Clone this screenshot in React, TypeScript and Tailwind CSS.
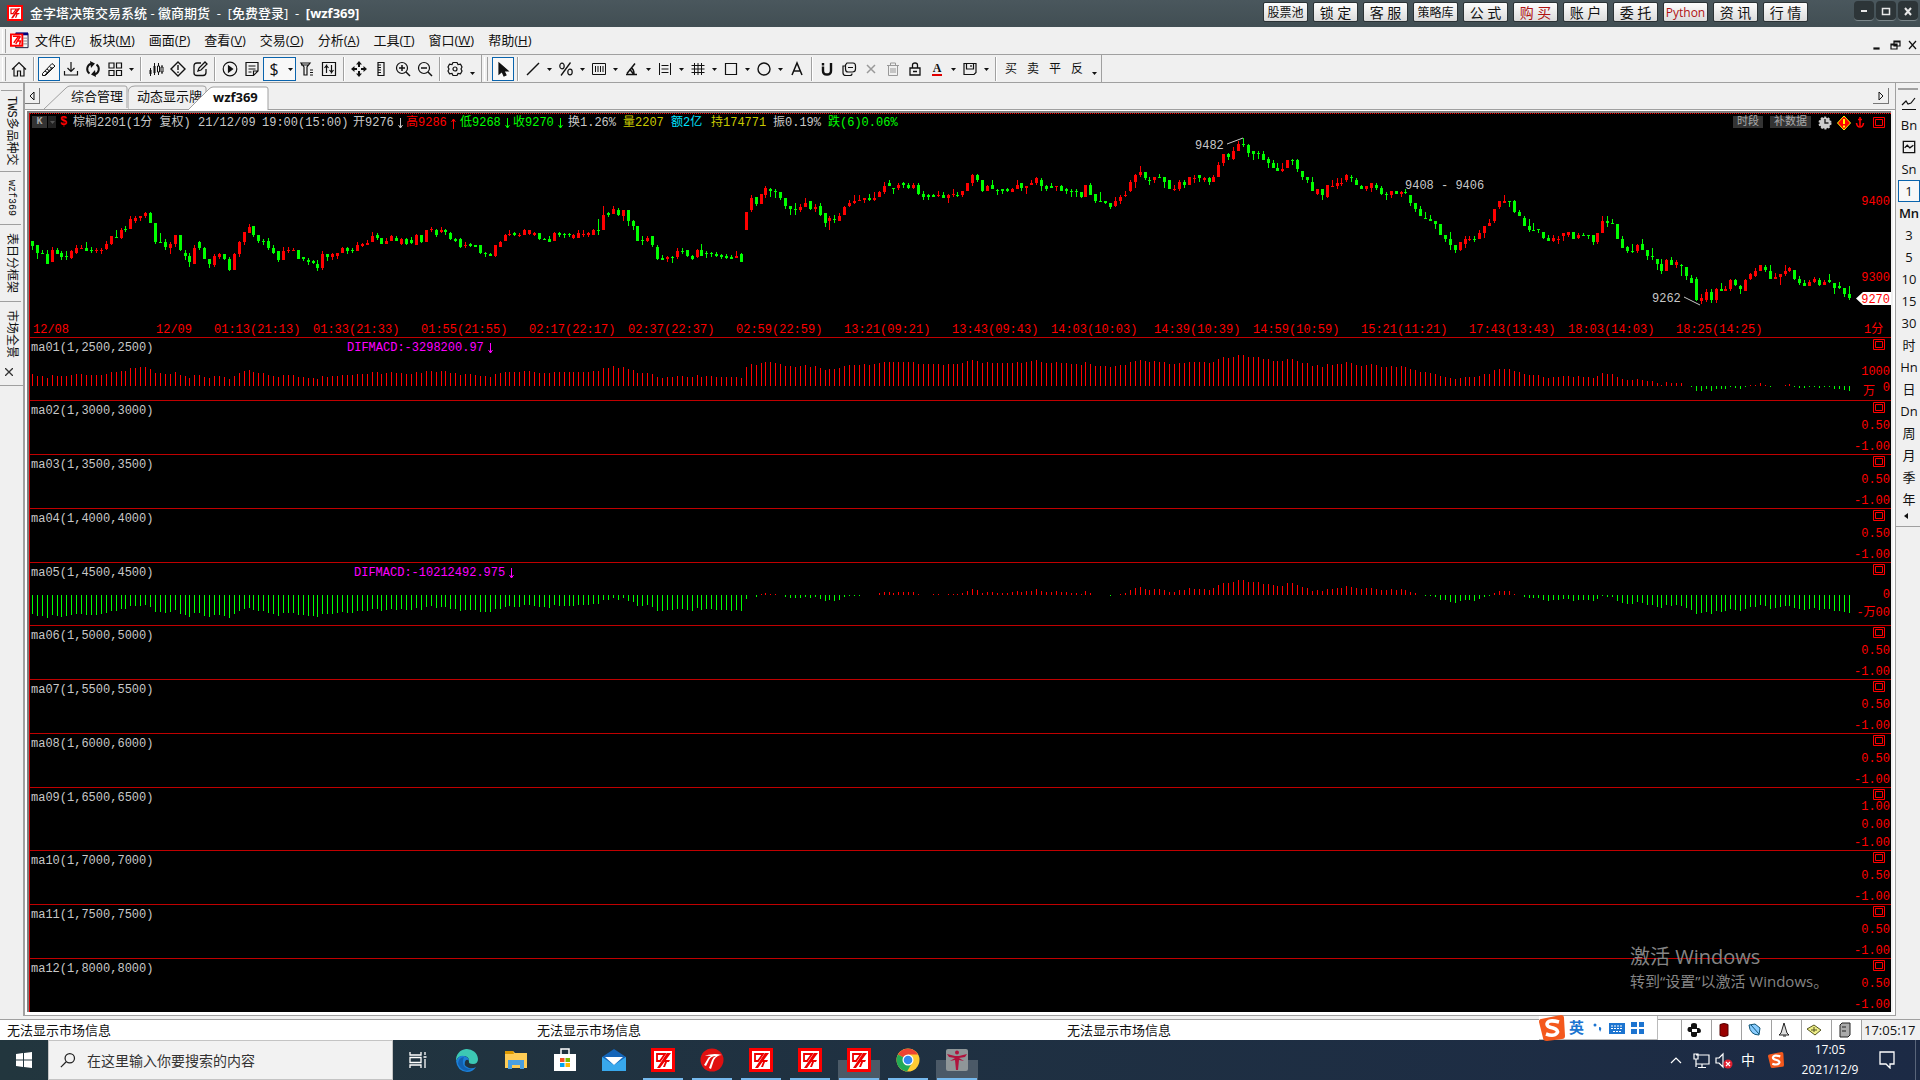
import React, { useState } from 'react';
import clsx from 'clsx';

// ---------- Price data ----------

// One candle per entry: colour (r/g), then high, body top, body bottom, low
const nightSession = `
g61,61,66,70 g65,65,73,79 g70,73,74,74 g70,74,84,84 r67,70,82,82 g68,70,74,74 g71,73,77,80 g71,76,77,80 r70,71,78,79 r65,68,73,74
r65,68,69,69 g62,68,71,71 g67,70,71,73 r68,70,71,73 r68,70,71,74 r61,64,69,70 r56,56,64,65 g50,57,58,58 r48,50,58,59 g46,49,50,52
r36,39,49,49 r36,38,41,43 r36,36,38,41 r32,33,36,38 g32,33,43,43 g43,43,62,64 g53,62,63,63 g59,62,67,70 r62,64,68,74 r55,55,64,67
g55,55,70,71 g70,73,76,80 g73,76,82,87 r65,68,84,84 g61,62,68,70 g67,68,79,79 g79,79,84,88 r74,76,85,87 r73,74,77,79 g74,74,79,80
g77,79,90,91 r73,74,90,90 r61,62,74,77 r52,52,62,65 r44,47,53,53 g46,46,55,57 g55,55,61,63 g59,61,62,65 g58,61,68,70 g65,68,73,74
g71,71,80,82 r67,71,80,80 r67,70,71,73 r68,70,71,71 g70,70,79,79 g77,77,79,81 g78,80,82,85 g80,81,83,84 g80,84,88,91 r71,74,88,90
g74,74,77,81 r73,74,77,80 r73,73,76,79 r67,68,73,73 g67,68,71,74 g68,70,71,73 r62,65,71,71 r63,64,66,67 r60,63,65,65 r52,56,62,62
g53,55,58,60 g58,58,64,64 r58,61,64,64 r55,56,61,61 g56,58,61,61 r58,59,64,65 g58,59,64,65 g57,60,63,64 r54,55,65,65 g55,55,62,63
r50,50,62,62 r47,49,50,52 g49,50,55,57 r47,50,52,53 g49,50,52,55 g52,53,59,60 g58,59,61,62 g58,59,67,68 r62,65,66,68 g63,64,66,67
g65,65,67,67 g65,65,73,74 g72,73,74,77 g73,74,76,76 r65,65,76,77 r61,62,67,67 r54,55,61,61 r50,54,55,56 g52,53,55,56 r53,55,56,57
r49,50,55,55 r50,50,54,55 r52,53,55,56 g53,53,59,60 g58,59,60,60 g56,59,62,62 r52,53,61,61 g52,53,55,57 g53,54,55,58 g53,54,55,57
r54,55,58,59 r50,53,58,58 r50,54,55,57 r52,53,55,57 r49,50,55,55 g39,50,51,55 r26,35,50,50 g32,33,35,37 r26,29,34,34 g28,30,35,36
r30,30,36,41 g30,30,41,46 g40,41,46,50 g46,46,61,61 g56,60,61,65 r56,58,61,62 g56,56,65,67 g65,67,79,80 g75,78,80,80 r76,77,79,82
g76,77,78,83 r68,71,77,79 g68,71,72,74 g70,70,76,77 g75,76,79,80 r69,70,77,78 g64,70,76,76 g71,73,74,78 g72,73,74,77 g72,74,76,77
g74,75,77,79 g74,76,78,79 g75,77,79,79 r71,76,78,78 g73,74,82,82`;

const daySession = `
r82,82,100,100 r65,68,80,82 g67,67,74,76 r64,64,74,74 r56,58,65,68 g58,59,61,67 g59,61,62,68 g62,62,68,70 g68,68,76,79 g76,76,79,85
g73,79,80,85 r74,77,80,82 r68,73,77,77 g71,71,79,80 r74,77,79,82 g73,76,85,86 g83,83,93,97 r86,88,91,100 g85,89,90,93 r83,86,91,91
r76,77,85,85 r70,73,76,77 r65,71,73,74 r65,70,71,71 r68,68,70,73 g64,68,70,71 r62,68,70,71 r61,62,67,67 r52,56,62,64 g50,53,56,56
g58,58,59,64 r53,55,58,60 g52,53,55,58 g53,55,58,59 r53,55,58,59 g53,55,64,65 g61,64,67,70 g64,65,67,70 g64,65,67,67 r61,65,66,67
g62,65,68,68 r64,65,68,73 r59,64,65,67 g62,65,66,67 r61,61,65,67 r53,53,61,61 r44,45,53,56 g44,45,50,52 g50,50,61,62 r55,56,61,61
g50,55,59,59 g59,60,61,65 g59,59,61,64 g58,59,61,62 r58,59,62,62 r50,55,59,59 g53,53,58,61 r56,56,58,64 r50,53,55,55 r47,48,53,55
g48,50,56,61 g55,56,59,61 g53,56,58,58 r56,56,57,61 g55,56,61,61 g58,59,61,64 g59,61,62,67 g59,61,62,67 g62,62,67,68 r55,55,67,67
g53,55,65,65 g64,64,71,73 g62,71,72,72 g71,71,73,74 g73,73,77,79 r67,71,76,77 r65,67,71,74 r61,65,66,67 r50,52,61,62 r44,45,52,58
r36,42,45,47 g42,42,48,50 g47,50,51,55 r47,47,50,53 g44,47,48,48 g47,47,52,58 g50,50,59,59 r55,59,60,61 r50,52,59,61 g50,52,55,58
r47,47,55,55 r45,48,49,53 g45,45,48,52 r47,48,50,52 g47,48,52,55 r45,47,52,52 r32,35,47,47 r24,24,33,36 g23,24,27,30 r17,21,29,30
r11,14,21,21 g8,14,15,17 g14,15,23,27 g21,21,24,30 g21,23,24,29 g21,24,30,30 g27,29,33,38 g30,33,38,38 g33,38,41,41 r33,39,41,42
r30,30,38,38 g29,30,31,35 g29,30,39,42 g41,41,47,50 g47,47,50,53 g47,52,61,61 r59,59,64,65 g59,59,65,70 r55,55,67,68 r50,56,57,57
r48,53,56,59 r48,53,54,56 r44,45,50,52 g45,47,48,52 g48,50,55,55 g55,56,59,59 r56,56,59,61 r53,53,58,62 g53,55,58,60 g56,58,64,65
g62,64,65,70 r61,61,65,68 g61,61,64,64 r61,62,64,67 g59,62,63,64 g65,65,73,76 g73,73,79,82 g76,79,86,86 g82,88,89,89 g85,89,91,91
g91,91,94,99 g94,94,105,105 g105,105,109,112 g102,109,115,120 g115,115,120,123 r112,112,120,121 r106,109,114,118 r106,109,110,111
g106,109,110,112 r100,103,109,109 r96,96,103,108 r89,93,96,96 r79,79,91,93 r71,71,77,79 r65,71,73,73 g71,71,72,77 g70,71,82,83
g80,82,86,86 g86,88,96,96 g89,96,100,102 g93,100,101,101 g99,99,100,103 g102,102,108,109 g105,108,111,111 r105,108,111,112
r106,109,110,114 r103,103,106,111 r102,102,105,107 g102,102,109,109 r103,105,108,109 g103,105,106,106 g105,105,106,109
g105,105,112,115 r103,103,112,114 r86,91,103,103 g86,91,93,97 g89,93,94,94 g94,94,109,109 g106,109,118,118 g116,117,121,123
g114,121,122,123 r114,115,121,123 g109,114,120,120 g120,120,126,130 g118,126,127,130 g129,129,134,140 g129,134,141,144
r129,130,141,141 g127,130,135,135 r130,132,135,138 g134,135,136,146 g137,137,146,150 g145,148,153,153 g147,149,170,171
r164,168,171,174 r159,162,170,172 g159,162,170,173 r158,159,170,173 g153,159,161,161 r156,159,161,161 r149,150,159,161
g149,150,155,156 g155,156,159,164 r149,150,161,161 r143,144,149,150 r138,141,146,147 r135,135,141,141 g135,137,140,142
g135,141,149,149 r143,147,149,149 r144,144,147,155 r135,141,144,146 r137,138,141,142 g140,140,149,150 g146,149,153,155
g150,153,156,156 r150,152,156,156 r147,149,152,153 g148,150,155,156 r150,152,155,155 g144,150,152,153 g153,153,158,164
g152,156,158,159 g158,158,164,167 g156,164,168,170`;

interface Candle {
  up: boolean;
  high: number;
  top: number;
  bottom: number;
  low: number;
}

const parseSession = (text: string, offset: number): Candle[] =>
  text.trim().split(/\s+/).map((item) => {
    const [high, top, bottom, low] = item.slice(1).split(',').map((n) => Number(n) + offset);
    return { up: item[0] === 'r', high, top, bottom, low };
  });

const candles = [...parseSession(nightSession, 67), ...parseSession(daySession, 17)];

const candleX = (i: number) => 3 + Math.floor((i * 64) / 13 + 0.4);

// Linear interpolation between the moving-average anchors
const interpolate = (points: number[][], x: number) => {
  const next = points.findIndex((p) => p[0] >= x);
  if (next <= 0) return points[0][1];
  const [x0, y0] = points[next - 1];
  const [x1, y1] = points[next];
  return y0 + ((y1 - y0) * (x - x0)) / (x1 - x0);
};

const buildBars = (anchors: number[][], slope: number) =>
  candles.map((c, i) => {
    const close = (c.up ? c.top : c.bottom) - 67;
    return Math.round(interpolate(anchors, i) - slope * close);
  });

const bars01 = buildBars([[0, 26.5], [149, 26], [214, 25], [245, 23], [290, 22], [369, 21]], 0.22);
const bars05 = buildBars(
  [[0, -2.5], [40, -1], [85, 1], [119, 4], [145, 4], [245, 6], [290, 9.5], [330, 9], [338, 11], [369, 11.5]],
  0.25
);

interface Panel {
  name: string;
  period: number;
  tall?: boolean;
  labels: [string, number][];
  value?: string;
  bars?: number[];
  base?: number;
}

const shortLabels: [string, number][] = [['0.50', 28], ['-1.00', 49]];

const panels: Panel[] = [
  { name: 'ma01', period: 2500, tall: true, labels: [['1000', 37], ['0', 53]], value: 'DIFMACD:-3298200.97', bars: bars01, base: 48 },
  { name: 'ma02', period: 3000, labels: shortLabels },
  { name: 'ma03', period: 3500, labels: shortLabels },
  { name: 'ma04', period: 4000, labels: shortLabels },
  { name: 'ma05', period: 4500, tall: true, labels: [['0', 35], ['-万00', 53]], value: 'DIFMACD:-10212492.975', bars: bars05, base: 32 },
  { name: 'ma06', period: 5000, labels: shortLabels },
  { name: 'ma07', period: 5500, labels: shortLabels },
  { name: 'ma08', period: 6000, labels: shortLabels },
  { name: 'ma09', period: 6500, tall: true, labels: [['1.00', 22], ['0.00', 40], ['-1.00', 58]] },
  { name: 'ma10', period: 7000, labels: shortLabels },
  { name: 'ma11', period: 7500, labels: shortLabels },
  { name: 'ma12', period: 8000, labels: shortLabels },
];

const timeLabels: [string, number][] = [
  ['12/08', 3], ['12/09', 126], ['01:13(21:13)', 184], ['01:33(21:33)', 283], ['01:55(21:55)', 391],
  ['02:17(22:17)', 499], ['02:37(22:37)', 598], ['02:59(22:59)', 706], ['13:21(09:21)', 814],
  ['13:43(09:43)', 922], ['14:03(10:03)', 1021], ['14:39(10:39)', 1124], ['14:59(10:59)', 1223],
  ['15:21(11:21)', 1331], ['17:43(13:43)', 1439], ['18:03(14:03)', 1538], ['18:25(14:25)', 1646],
];

// ---------- Toolbar icons ----------

const Svg = ({ children, size = 16 }: { children: React.ReactNode; size?: number }) => (
  <svg width={size} height={size} viewBox="0 0 16 16" fill="none" stroke="#111" strokeWidth="1.2" aria-hidden="true">
    {children}
  </svg>
);

const icons: Record<string, React.ReactNode> = {
  home: <path d="M1 8.500 8 1.500l7 7M3 7v8h3.500v-5h3v5H13V7" />,
  pen: <path strokeWidth="1" d="M1.500 12.500 11 2.500l3 2.500-9.500 9.500H1.500zM4 10l3 2M6 8l2.500 2M8.500 5.500l2.500 2M4 14l7.500-8" />,
  download: <path d="M8 1v9M4.500 7 8 10.500 11.500 7M1.500 10v4h13v-4" />,
  refresh: (
    <>
      <path strokeWidth="2" d="M4.500 12.500A5.500 5.500 0 0 1 6 2.800M11.500 3.500A5.500 5.500 0 0 1 10 13.200" />
      <path fill="#111" stroke="none" d="M5 0l5 2.500L6 7zM11 16l-5-2.500L10 9z" />
    </>
  ),
  grid: <path d="M2 2h5v5H2zM9.500 2h5v5h-5zM2 9.500h5v5H2zM9.500 9.500h5v5h-5z" />,
  candles: (
    <>
      <path d="M2.500 7v8M6.500 2v12M10.500 2v12M14 4v9" strokeWidth="1" />
      <path fill="#111" stroke="none" d="M1.500 9h2v4h-2zM5.500 5h2v7h-2z" />
      <path fill="#fff" strokeWidth="1" d="M9.500 5h2v6h-2zM13 6h2v5h-2z" />
    </>
  ),
  diamond: <path d="M8 1l7 7-7 7-7-7zM8 4v5M8 10.500v1.500" strokeWidth="1.400" />,
  edit: <path strokeWidth="1.300" d="M9 2H5Q2 2 2 5v7q0 2.500 3 2.500h6q3 0 3-3V8M6 10l1-3 6-6 2 2-6 6z" />,
  play: (
    <>
      <circle cx="8" cy="8" r="6.800" />
      <path fill="#111" d="M6.500 5l4 3-4 3z" />
    </>
  ),
  note: <path d="M2 1.500h12V10l-4.500 4.500H2zM4.500 5h7M4.500 8h7M4.500 11h3M14 10H9.500v4.500" />,
  filter: <path d="M2 2h9L8 6v8H5V6zM2 4h8M11 9h3M11 11.500h3M11 14h3" />,
  sort: <path d="M1.500 1.500h13v13h-13zM5.500 12V4.500L3.500 7M5.500 4.500l2 2.500M10.500 4v7.500l2-2.500M10.500 11.500l-2-2.500" />,
  move: (
    <>
      <path d="M8 2v4M8 10v4M2 8h4M10 8h4" strokeWidth="2" />
      <path fill="#111" d="M8 0l3 3.500H5zM8 16l3-3.500H5zM0 8l3.500-3v6zM16 8l-3.500-3v6z" stroke="none" />
    </>
  ),
  ruler: <path d="M5 1.500h6v13H5zM5 4h3M5 6.500h3M5 9h3M5 11.500h3" />,
  zoomIn: (
    <>
      <circle cx="7" cy="7" r="5.500" />
      <path d="M7 4v6M4 7h6M11 11l4 4" strokeWidth="1.500" />
    </>
  ),
  zoomOut: (
    <>
      <circle cx="7" cy="7" r="5.500" />
      <path d="M4 7h6M11 11l4 4" strokeWidth="1.500" />
    </>
  ),
  gear: (
    <>
      <path d="M6 1.500h4l1 2 2.500-.3L15 6l-1 2 1 2-1.500 2.800-2.500-.3-1 2H6l-1-2-2.500.3L1 10l1-2-1-2 1.500-2.800 2.500.3z" />
      <circle cx="8" cy="8" r="2" />
    </>
  ),
  cursor: <path fill="#111" d="M4 2v11l3-2.500 2 4.500 2-1-2-4h4z" />,
  line: <path d="M2 14 14 2" strokeWidth="1.500" />,
  percent: (
    <>
      <path d="M3 14.500 12.500 1.500" strokeWidth="1.300" />
      <ellipse cx="4" cy="5" rx="2.200" ry="2.800" />
      <ellipse cx="12" cy="11" rx="2.200" ry="2.800" />
    </>
  ),
  columns: <path d="M1.500 2.500h13v11h-13zM4.500 5v6M7 5v6M9.500 5v6M12 5v6" strokeWidth="1" />,
  angle: <path strokeWidth="1.500" d="M2 13.500h11M3 12.500l8-10M5.500 8l4.500 5.500M7 7q3 1 3 6" />,
  bounds: <path d="M2.500 2v12M13.500 2v12M4.500 4.500h7M4.500 8h7M4.500 11.500h7" strokeWidth="1" />,
  hash: <path d="M1.500 4.500h13M1.500 8h13M1.500 11.500h13M4.500 2v12M8 2v12M11.500 2v12" strokeWidth="1" />,
  square: <path d="M2.500 2.500h11v11h-11z" />,
  circle: <circle cx="8" cy="8" r="6" strokeWidth="1.400" />,
  text: <path d="M3 14 8 2l5 12M5 10h6" strokeWidth="1.500" />,
  magnet: <path d="M4 2v8q0 3.500 4 3.500T12 10V2" strokeWidth="2.400" strokeDasharray="2.500 1 40" />,
  copy: (
    <>
      <path d="M4 5H2v7q0 2.500 3 2.500h4q2 0 2-2" />
      <path d="M6 2h6q2.500 0 2.500 3v3q0 3-3 3H7Q4.500 11 4.500 8V4zM7 6.500h5" />
    </>
  ),
  close: <path d="M4 4l8 8M12 4l-8 8" stroke="#999" strokeWidth="1.500" />,
  trash: <path d="M2 4.500h12M5.500 4V2h5v2M3.500 5v9.500h9V5M6 7v5M8 7v5M10 7v5" stroke="#999" strokeWidth="1" />,
  lock: <path d="M3 7h10v7H3zM5.500 7V4q0-2 2.500-2t2.500 2v3M6 10.500h4" strokeWidth="1.300" />,
  save: <path d="M2 2.500h12v9l-2 2H2zM4.500 2.500V8h7V2.500M9 4v2" />,
};

const Caret = () => (
  <svg width="5" height="3" viewBox="0 0 5 3" aria-hidden="true">
    <path d="M0 0h5L2.500 3z" fill="#111" />
  </svg>
);

const Separator = () => (
  <span className="flex h-6 w-2 justify-center">
    <span className="w-0.5 border-l border-r border-l-[#a0a0a0] border-r-white" />
  </span>
);

const Grip = () => <span className="mx-0.5 h-6 w-1 border-l border-r border-l-white border-r-[#a0a0a0]" />;

interface ToolProps {
  icon?: string;
  text?: string;
  active?: boolean;
  menu?: boolean;
}

const Tool: React.FC<ToolProps> = ({ icon, text, active, menu }) => (
  <button
    type="button"
    aria-label={icon ?? text}
    className={clsx('flex h-6 items-center', active && 'border-y border-[#0a64ad] bg-[#f8f8f8] outline -outline-offset-1 outline-[#0a64ad]')}
  >
    <span className="flex w-[22px] justify-center text-base leading-none">{icon ? <Svg>{icons[icon]}</Svg> : text}</span>
    {menu && (
      <span className="flex w-[11px] justify-center">
        <Caret />
      </span>
    )}
  </button>
);

// ---------- Brand icons ----------

const KLogo = ({ size }: { size: number }) => (
  <svg width={size} height={size} viewBox="0 0 24 24" aria-hidden="true">
    <path fill="#f00" d="M0 0h24v24H0z" />
    <path fill="#fff" d="M3 3h18v18H3z" />
    <path fill="none" stroke="#e00" strokeWidth="1.800" d="M6 6h8l-5 7H6z" />
    <path fill="#e00" d="M16 5h4L9 20H6zM13 12h6l-1 2h-2l-2 5h-2l2-5h-3z" />
  </svg>
);

const SogouLogo = ({ size }: { size: number }) => (
  <svg width={size} height={size} viewBox="0 0 26 26" aria-hidden="true">
    <path fill="#f4581c" d="M2 4 22 0q3 0 3 3l1 18q0 3-3 3L8 26q-4 0-4-3L0 7q0-3 2-3z" />
    <path d="M20 7Q9 4 8 9q0 3 6 4 6 2 4 5-3 4-11 1" fill="none" stroke="#fff" strokeWidth="3.600" />
  </svg>
);

// ---------- Window header ----------

const quickLinks = ['股票池', '锁 定', '客 服', '策略库', '公 式', '购 买', '账 户', '委 托', 'Python', '资 讯', '行 情'];

const TitleBar = () => (
  <header className="flex h-[27px] shrink-0 items-start bg-linear-to-b from-[#4a575d] to-[#414e53] pr-0.5 text-white">
    <span className="mt-[5px] ml-[7px]">
      <KLogo size={16} />
    </span>
    <h1 className="ml-[7px] text-[13px] leading-[26px] font-medium whitespace-pre">
      金字塔决策交易系统 - 徽商期货  -  [免费登录]  -  <b className="font-bold">[wzf369]</b>
    </h1>
    <nav className="mt-0.5 ml-auto flex gap-[5px]">
      {quickLinks.map((label) => (
        <button
          type="button"
          key={label}
          className={clsx(
            'h-5 w-[45px] rounded-xs border border-[#2b3235] bg-linear-to-b from-[#fdfdfd] to-[#dcdcdc] leading-[17px] whitespace-nowrap',
            label.includes(' ') ? 'text-sm' : 'text-xs',
            label === '购 买' || label === 'Python' ? 'text-[#b01212]' : 'text-[#111]'
          )}
        >
          {label}
        </button>
      ))}
    </nav>
    <div className="mt-px ml-[46px] flex gap-0.5">
      {['M5 8h6', 'M4.500 5.500h7v6h-7z', 'M5 5l6 7M11 5l-6 7'].map((d, i) => (
        <button
          type="button"
          key={d}
          aria-label={['minimize', 'maximize', 'close'][i]}
          className="flex h-5 w-5 items-center justify-center rounded-sm border-b border-[#7b868a] bg-[#2d3538]"
        >
          <svg width="16" height="16" viewBox="0 0 16 16" fill="none" stroke="#e8e8e8" strokeWidth={i === 1 ? 1.5 : 2}>
            <path d={d} />
          </svg>
        </button>
      ))}
    </div>
  </header>
);

const menus = [['文件', 'F'], ['板块', 'M'], ['画面', 'P'], ['查看', 'V'], ['交易', 'O'], ['分析', 'A'], ['工具', 'T'], ['窗口', 'W'], ['帮助', 'H']];

const MenuBar = () => (
  <nav className="flex h-7 shrink-0 items-center border-b border-[#a0a0a0] pr-0.5">
    <Grip />
    <svg width="19" height="18" viewBox="0 0 20 18" className="mr-1.5 ml-0.5" aria-hidden="true">
      <path d="M6 1h13v15H6z" fill="#f4f4f4" stroke="#113" />
      <path d="M6 0h13v3H6z" fill="#00007c" />
      <path d="M14 6h4M14 9h4M14 12h4" stroke="#888" />
      <path d="M1 2h12v12H1z" fill="#fff" stroke="#f00" strokeWidth="2" />
      <path d="M3 4h6L4 11M11 4 6 12M8 9h3l-1 4" stroke="#f00" strokeWidth="1.600" fill="none" />
    </svg>
    {menus.map(([label, key]) => (
      <button type="button" key={key} className="mr-3.5 text-[13px]">
        {label}(<u>{key}</u>)
      </button>
    ))}
    <div className="mt-2 ml-auto flex gap-1.5">
      {['M1 9h5v1H1z', 'M4 2h6v5H4zM4 3h6M1 5h6v5H1zM1 6h6', 'M2 2l7 8M9 2l-7 8'].map((d, i) => (
        <button type="button" key={d} aria-label={['minimize chart', 'restore chart', 'close chart'][i]}>
          <svg width="11" height="12" viewBox="0 0 11 12" fill={i === 1 ? '#efefef' : 'none'} stroke="#111" strokeWidth="1.200">
            <path d={d} />
          </svg>
        </button>
      ))}
    </div>
  </nav>
);

const More = () => (
  <button type="button" aria-label="more" className="flex h-6 w-[13px] items-end justify-center pb-1.5">
    <Caret />
  </button>
);

const ToolBar = () => (
  <div className="flex h-7 shrink-0 items-center border-b border-[#a0a0a0] pt-px">
    <Grip />
    <Tool icon="home" />
    <Separator />
    <Tool icon="pen" active />
    <Tool icon="download" />
    <Tool icon="refresh" />
    <Tool icon="grid" menu />
    <Separator />
    <Tool icon="candles" />
    <Tool icon="diamond" />
    <Tool icon="edit" />
    <Separator />
    <Tool icon="play" />
    <Tool icon="note" />
    <Tool text="$" menu active />
    <Tool icon="filter" />
    <Tool icon="sort" />
    <Separator />
    <Tool icon="move" />
    <Tool icon="ruler" />
    <Tool icon="zoomIn" />
    <Tool icon="zoomOut" />
    <Separator />
    <Tool icon="gear" />
    <More />
    <span className="ml-0.5 h-7 border-l border-[#a0a0a0]" />
    <Grip />
    <span className="w-0.5" />
    <Tool icon="cursor" active />
    <Separator />
    <Tool icon="line" menu />
    <Tool icon="percent" menu />
    <Tool icon="columns" menu />
    <Tool icon="angle" menu />
    <Tool icon="bounds" menu />
    <Tool icon="hash" menu />
    <Tool icon="square" menu />
    <Tool icon="circle" menu />
    <Tool icon="text" />
    <Separator />
    <Tool icon="magnet" />
    <Tool icon="copy" />
    <Tool icon="close" />
    <Tool icon="trash" />
    <Tool icon="lock" />
    <button type="button" aria-label="text colour" className="flex h-6 items-center">
      <span className="mx-1.5 w-2.5 border-b-2 border-[#e00000] text-center text-xs leading-3 font-bold [font-family:'Liberation_Serif',serif]">
        A
      </span>
      <span className="flex w-[11px] justify-center">
        <Caret />
      </span>
    </button>
    <Tool icon="save" menu />
    <Separator />
    {['买', '卖', '平', '反'].map((label) => (
      <button type="button" key={label} className="w-[22px] text-xs">
        {label}
      </button>
    ))}
    <More />
    <span className="h-7 border-l border-[#a0a0a0]" />
  </div>
);

// ---------- Docks ----------

const LeftDock = () => (
  <aside className="w-[23px] shrink-0">
    <div className="h-[303px] border-b border-[#a0a0a0] pt-1">
      <div className="mx-px h-1 border-b border-[#a0a0a0]" />
      {[
        ['TWS多品种交', 'h-[81px]'],
        ['wzf369', 'h-[53px]'],
        ['表日分框架', 'h-[77px]'],
        ['市场全景', 'h-[64px]'],
      ].map(([label, height], i) => (
        <button
          type="button"
          key={label}
          className={clsx(
            'flex w-[21px] items-center justify-center leading-[14px] [font-family:"Liberation_Mono","Noto_Sans_CJK_SC",monospace]',
            height,
            i === 1 ? 'text-[10px]' : 'text-xs',
            i < 3 && 'border-b border-[#a0a0a0]'
          )}
        >
          <span className="whitespace-nowrap [text-orientation:sideways] [writing-mode:vertical-rl]">{label}</span>
        </button>
      ))}
      <button type="button" aria-label="close dock" className="flex h-3 w-[18px] items-center justify-center">
        <svg width="8" height="8" viewBox="0 0 8 8" stroke="#333" strokeWidth="1.300">
          <path d="M0 0l8 8M8 0 0 8" />
        </svg>
      </button>
    </div>
  </aside>
);

const periods = ['line', 'Bn', 'tick', 'Sn', '1', 'Mn', '3', '5', '10', '15', '30', '时', 'Hn', '日', 'Dn', '周', '月', '季', '年'];

const RightDock = () => {
  const [period, setPeriod] = useState('1');

  return (
    <aside className="w-[25px] shrink-0 border-l border-[#a0a0a0]">
      <div className="flex flex-col border-b border-[#a0a0a0] pt-[5px] pb-1">
        <div className="mx-0.5 h-1 border-t-2 border-[#a0a0a0]" />
        {periods.map((p) => (
          <button
            type="button"
            key={p}
            aria-label={p}
            onClick={() => setPeriod(p)}
            className={clsx(
              'ml-0.5 flex h-[22px] items-center justify-center text-[13px] leading-none',
              p === period && 'border border-[#0a64ad] bg-[#f8f8f8]',
              p === 'Mn' && 'font-semibold'
            )}
          >
            {p === 'line' && <Svg><path d="M1 10l4-4 2 3 3-1 4-5M1 14.500h14" /></Svg>}
            {p === 'tick' && <Svg size={14}><path d="M1.500 1.500h13v13h-13zM3 9l3-3 3 3 4-3" strokeWidth="1.500" /></Svg>}
            {p !== 'line' && p !== 'tick' && p}
          </button>
        ))}
        <span className="flex h-3 items-center pl-2">
          <svg width="4" height="6" viewBox="0 0 4 6" aria-hidden="true">
            <path d="M4 0v6L0 3z" fill="#111" />
          </svg>
        </span>
      </div>
    </aside>
  );
};

// ---------- Tabs ----------

const TabStrip = () => (
  <div className="flex h-[27px] shrink-0 items-end border-b border-[#a0a0a0] pr-1.5">
    <button
      type="button"
      aria-label="previous tab"
      className="mb-[5px] flex h-4 w-[15px] items-center justify-center border-r border-b border-[#777]"
    >
      <svg width="6" height="10" viewBox="0 0 6 10" fill="none" stroke="#111">
        <path d="M5 1v8L1 5z" />
      </svg>
    </button>
    {[
      ['综合管理', 'ml-1 w-[84px] pl-[27px]', 'M0 24 22 3q2-2 4-2h55q2 0 2 2v20'],
      ['动态显示牌', 'w-[79px] pl-[9px]', 'M0 24V8q0-7 7-7h68q3 0 3 2v20'],
      ['wzf369', 'z-10 -mb-px -ml-[19px] w-[81px] pl-[25px] font-bold', 'M0 24 21 3q2-2 4-2h53q2 0 2 2v21'],
    ].map(([label, layout, d], i) => (
      <button
        type="button"
        key={label}
        className={clsx('relative h-6 overflow-hidden text-left text-[13px] whitespace-nowrap', layout)}
      >
        <svg className="absolute inset-0 h-full w-full" fill={i === 2 ? '#fff' : '#f0f0f0'} stroke="#a0a0a0">
          <path d={d} />
        </svg>
        <span className="relative">{label}</span>
      </button>
    ))}
    <button
      type="button"
      aria-label="next tab"
      className="mb-[5px] ml-auto flex h-4 w-4 items-center justify-center border-r border-b border-[#777]"
    >
      <svg width="6" height="10" viewBox="0 0 6 10" fill="none" stroke="#111">
        <path d="M1 1v8l4-4z" />
      </svg>
    </button>
  </div>
);

// ---------- Chart ----------

const PanelButton = () => (
  <button type="button" aria-label="maximize panel" className="relative mt-px mr-1.5">
    <svg className="block" width="12" height="11" viewBox="0 0 12 11" fill="none" stroke="#f00">
      <path d="M.5.5h11v10H.5zM2.500 2.500h7v6h-7z" />
    </svg>
  </button>
);

const Arrow = ({ up = false }: { up?: boolean }) => (
  <svg className="ml-1 inline-block" width="5" height="11" viewBox="0 0 5 11" fill="none" stroke="currentColor" aria-hidden="true">
    <path d={up ? 'M2.500 11V1M.5 4l2-3 2 3' : 'M2.500 0v10M.5 7l2 3 2-3'} />
  </svg>
);

const quotes = [
  ['棕榈2201(1分 复权)', 'w-[125px] text-[#c8c8c8]', ''],
  ['21/12/09', 'w-16 text-[#c8c8c8]', ''],
  ['19:00(15:00)', 'w-[91px] text-[#c8c8c8]', ''],
  ['开9276', 'w-[53px] text-[#c8c8c8]', 'down'],
  ['高9286', 'w-[54px] text-[#f00]', 'up'],
  ['低9268', 'w-[53px] text-[#0f0]', 'down'],
  ['收9270', 'w-[55px] text-[#0f0]', 'down'],
  ['换1.26%', 'w-[55px] text-[#c8c8c8]', ''],
  ['量2207', 'w-12 text-[#c8c800]', ''],
  ['额2亿', 'w-10 text-[#00e4ff]', ''],
  ['持174771', 'w-[62px] text-[#c8c800]', ''],
  ['振0.19%', 'w-[55px] text-[#c8c8c8]', ''],
  ['跌(6)0.06%', 'w-20 text-[#0f0]', ''],
];

const PricePanel = () => (
  <section className="relative min-h-0 flex-1 border-t border-dotted border-[#f00]">
    <svg
      className="absolute inset-0 h-full w-full"
      viewBox="0 1 1861 223"
      preserveAspectRatio="xMinYMin meet"
      fontSize="12"
      role="img"
      aria-label="price"
    >
      <g shapeRendering="crispEdges">
        {candles.map((c, i) => (
          <g key={i} fill={c.up ? '#f00' : '#0f0'}>
            <rect x={candleX(i) - 1} y={c.high} width="1" height={Math.max(1, c.low - c.high)} />
            <rect x={candleX(i) - 2} y={c.top} width="3" height={Math.max(1, c.bottom - c.top)} />
          </g>
        ))}
      </g>
      <g fill="#c8c8c8" stroke="none">
        <text x="1165" y="36">9482</text>
        <text x="1375" y="76">9408 - 9406</text>
        <text x="1622" y="189">9262</text>
      </g>
      <path d="M1197 31l16-6M1654 184l16 8" stroke="#c8c8c8" />
      <path d="M1826 185.500l7-6.500h29v13h-29z" fill="#fff" />
      <g fill="#f00">
        <text x="1860" y="92" textAnchor="end">9400</text>
        <text x="1860" y="168" textAnchor="end">9300</text>
        <text x="1860" y="190" textAnchor="end">9270</text>
        {timeLabels.map(([label, x]) => (
          <text key={label} x={x} y="220">{label}</text>
        ))}
        <text x="1834" y="220">1分</text>
      </g>
    </svg>

    <div className="relative flex h-4 items-center text-xs leading-none">
      <button type="button" className="ml-0.5 h-3 w-[15px] bg-[#333] text-[10px] leading-none font-bold text-[#aaa]">K</button>
      <button type="button" aria-label="symbol list" className="ml-px flex h-3 w-2 items-center justify-center bg-[#222]">
        <svg width="5" height="3" viewBox="0 0 5 3"><path d="M0 0h5L2.500 3z" fill="#555" /></svg>
      </button>
      <b className="mr-0.5 w-[15px] text-center text-[#f00]">$</b>
      <div className="flex pt-0.5">
        {quotes.map(([label, style, arrow]) => (
          <span key={label} className={clsx('flex shrink-0 items-center whitespace-nowrap', style)}>
            {label}
            {arrow && <Arrow up={arrow === 'up'} />}
          </span>
        ))}
      </div>
      <button type="button" className="ml-auto h-3 w-[30px] bg-[#333] text-[11px] leading-none text-[#aaa]">时段</button>
      <button type="button" className="mr-1.5 ml-[7px] h-3 w-[41px] bg-[#333] text-[11px] leading-none text-[#aaa]">补数据</button>
      <svg width="56" height="15" viewBox="0 0 56 15" aria-hidden="true">
        <circle cx="8" cy="8" r="5.500" fill="#ccc" stroke="#ccc" strokeDasharray="2 1.500" strokeWidth="2" />
        <path d="M8 4v4h3.500" stroke="#222" fill="none" strokeWidth="1.400" />
        <path d="M27 1l6.500 7L27 15l-6.500-7z" fill="#f00" stroke="#ff0" />
        <path d="M27 4v5M27 10.500v2" stroke="#ff0" strokeWidth="2" />
        <path d="M43 2v9M41 4.500h4M39.500 8q.5 4 3.500 4t3.500-4" stroke="#f00" strokeWidth="1.600" fill="none" />
      </svg>
      <PanelButton />
    </div>
  </section>
);

const IndicatorPanel: React.FC<{ panel: Panel }> = ({ panel }) => {
  const { name, period, tall, labels, value, bars, base = 0 } = panel;

  return (
    <section className={clsx('relative flex shrink-0 items-start border-t border-[#c00000]', tall ? 'h-[63px]' : 'h-[54px]')}>
      <svg
        className="absolute inset-0 h-full w-full"
        viewBox={tall ? '0 0 1861 62' : '0 0 1861 53'}
        preserveAspectRatio="xMinYMin meet"
        fontSize="12"
        role="img"
        aria-label={name}
      >
        <g shapeRendering="crispEdges">
          {bars?.map((h, i) =>
            h === 0 ? null : (
              <rect
                key={i}
                x={candleX(i) - 1}
                y={h > 0 ? base - h : base}
                width="1"
                height={Math.abs(h)}
                fill={h > 0 ? '#f00' : '#0f0'}
              />
            )
          )}
        </g>
        <g fill="#f00" textAnchor="end">
          {labels.map(([label, y]) => (
            <text key={label} x="1860" y={y}>{label}</text>
          ))}
          {name === 'ma01' && <text x="1845" y="57">万</text>}
        </g>
      </svg>
      <span className={clsx('relative pl-px text-xs leading-5 text-[#c8c8c8]', name === 'ma05' ? 'w-[324px]' : 'w-[317px]')}>
        {name}(1,{period},{period})
      </span>
      {value && (
        <span className="relative flex items-center text-xs leading-5 text-[#f0f]">
          {value}
          <Arrow />
        </span>
      )}
      <span className="flex-1" />
      <PanelButton />
    </section>
  );
};

const Chart = () => (
  <div className="flex min-h-0 flex-1 flex-col border-t-2 border-l-2 border-[#808080]">
    <div className="relative flex min-h-0 flex-1 flex-col border-l border-[#d00000] bg-black [font-family:'Liberation_Mono','Noto_Sans_CJK_SC',monospace]">
      <PricePanel />
      {panels.map((panel) => (
        <IndicatorPanel key={panel.name} panel={panel} />
      ))}
      <div className="pointer-events-none absolute right-16 bottom-[21px] w-[197px] text-[#858585] [font-family:'Open_Sans','Noto_Sans_CJK_SC',sans-serif]">
        <p className="text-xl leading-7">激活 Windows</p>
        <p className="text-[15px] leading-5 whitespace-nowrap">转到“设置”以激活 Windows。</p>
      </div>
    </div>
  </div>
);

// ---------- Status bar ----------

const statusIcons: [string, React.ReactNode][] = [
  ['python', <path d="M5 3q0-2 3-2t3 2v4H6v3H3Q1 9 1.500 7T3 5h2zM11 13q0 2-3 2t-3-2v-3h6V6h2q2 1 2 3t-2 2h-2z" fill="#111" />],
  ['database', <path d="M4 2.500q4-2 8 0v11q-4 2-8 0z" fill="#900" stroke="#500" />],
  ['dish', <path d="M3 3q1 10 10 10L14 6 9 2zM5 3l8 9" fill="#8cf" stroke="#157" />],
  ['alarm', <path d="M8 1 5 11l-2 2h10l-2-2zM7 14h3" fill="#ddd" stroke="#222" />],
  ['message', <path d="M1 7l7-4 7 5-6 5zM5 8h6M8 5v5" fill="#ee8" stroke="#552" />],
  ['server', <path d="M4 3l2-2h8v12l-2 2H4zM6 5h4M6 9h4" fill="#aaa" stroke="#222" />],
];

const StatusBar = () => (
  <footer className="flex h-[21px] shrink-0 border-t border-[#a0a0a0] bg-white text-[13px] leading-5">
    <span className="w-[530px] shrink-0 pl-[7px]">无法显示市场信息</span>
    <span className="w-[530px] shrink-0 pl-[7px]">无法显示市场信息</span>
    <div className="relative flex-1 pl-[7px]">
      无法显示市场信息
      <div className="absolute -top-1 right-[23px] flex h-6 w-[119px] items-center gap-2 border-r border-b border-[#bbb] bg-white pr-1 text-[#1c74d0]">
        <SogouLogo size={26} />
        <b className="-ml-1 text-[15px] leading-none">英</b>
        <svg width="52" height="16" viewBox="0 0 52 16" fill="#1c74d0" aria-hidden="true">
          <circle cx="3" cy="5" r="1.500" />
          <path d="M7 7q4 0 1 5 0-2-1-2zM17 3h16v11H17z" />
          <path d="M19 6h12M19 8.500h12M21 11.500h8" stroke="#fff" strokeDasharray="2 1" />
          <path d="M39 2h6v5h-6zM47 2h5v5h-5zM39 9h6v5h-6zM47 9h5v5h-5z" />
        </svg>
      </div>
    </div>
    {statusIcons.map(([name, shape]) => (
      <button
        type="button"
        key={name}
        aria-label={name}
        className="flex w-[30px] shrink-0 items-center justify-center border-l border-[#a0a0a0] pr-1.5"
      >
        <svg width="16" height="16" viewBox="0 0 16 16">{shape}</svg>
      </button>
    ))}
    <time className="w-[59px] shrink-0 border-l border-[#a0a0a0] bg-[#f0f0f0] pl-0.5">17:05:17</time>
  </footer>
);

// ---------- Taskbar ----------

const ChromeIcon = () => (
  <svg width="24" height="24" viewBox="0 0 24 24" aria-hidden="true">
    <circle cx="12" cy="12" r="11.500" fill="#fc3" />
    <path d="M12 12 2 6.500A11.500 11.500 0 0 1 22 6.500H12z" fill="#e43" />
    <path d="M12 12 2 6.500A11.500 11.500 0 0 0 11 23.500L16 15z" fill="#2a5" />
    <circle cx="12" cy="12" r="5.500" fill="#fff" />
    <circle cx="12" cy="12" r="4.300" fill="#38e" />
  </svg>
);

const apps: { name: string; open?: boolean; active?: boolean; icon: React.ReactNode }[] = [
  {
    name: 'task view',
    icon: (
      <svg width="18" height="18" viewBox="0 0 18 18" fill="none" stroke="#fff" strokeWidth="1.300">
        <path d="M1 1v3h11V1M1 17v-3h11v3M1 6.500h11v5H1zM16 1v3M16 8v9M14.500 6h3" />
      </svg>
    ),
  },
  {
    name: 'edge',
    icon: (
      <svg width="24" height="24" viewBox="0 0 24 24">
        <path d="M1 13A11 11 0 0 1 23 11q0 5-5 5-5 0-4-3 0-5-6-5-5 0-7 5z" fill="#3cc8b4" />
        <path d="M1 13q3-6 8-5 5 1 5 5-1-2-3-1-4 5 3 8 4 1 7-1-3 5-9 5Q2 23 1 13z" fill="#1b80d8" />
        <path d="M8 13q-1 8 9 8-9 5-14-5 0-6 6-7-1 2-1 4z" fill="#1260b0" />
      </svg>
    ),
  },
  {
    name: 'explorer',
    icon: (
      <svg width="24" height="24" viewBox="0 0 24 24">
        <path d="M1 3h8l2 2h12v15H1z" fill="#fc5" />
        <path d="M1 3h8l1 3H1z" fill="#d90" />
        <path d="M4 21v-9h16v9h-4v-4H8v4z" fill="#4a9fe0" />
      </svg>
    ),
  },
  {
    name: 'store',
    icon: (
      <svg width="24" height="24" viewBox="0 0 24 24">
        <path d="M8 6V1h8v5" stroke="#fff" strokeWidth="1.500" fill="none" />
        <path d="M1 6h22v17H1z" fill="#fff" />
        <path d="M7 10h4.500v4H7z" fill="#f25022" />
        <path d="M12.500 10H17v4h-4.500z" fill="#7fba00" />
        <path d="M7 15h4.500v4H7z" fill="#00a4ef" />
        <path d="M12.500 15H17v4h-4.500z" fill="#ffb900" />
      </svg>
    ),
  },
  {
    name: 'mail',
    icon: (
      <svg width="24" height="24" viewBox="0 0 24 24">
        <path d="M0 9 12 1l12 8v14H0z" fill="#1565b8" />
        <path d="M0 9l12 8 12-8v14H0z" fill="#38a8ec" />
        <path d="M3 9h18l-9 8z" fill="#fff" />
      </svg>
    ),
  },
  { name: 'trader 1', open: true, icon: <KLogo size={24} /> },
  {
    name: 'quotes',
    open: true,
    icon: (
      <svg width="24" height="24" viewBox="0 0 24 24">
        <circle cx="12" cy="12" r="11.500" fill="#e01010" />
        <path d="M2 9q10-5 20-2-5 0-8 5l-3 9-2-1 3-8q1-3 4-4-5 0-7 4l-3 6-2-1 3-5q1-3 4-4-5-1-9 1z" fill="#fff" />
      </svg>
    ),
  },
  { name: 'trader 2', open: true, icon: <KLogo size={24} /> },
  { name: 'trader 3', open: true, icon: <KLogo size={24} /> },
  { name: 'trader 4', open: true, active: true, icon: <KLogo size={24} /> },
  { name: 'chrome', open: true, icon: <ChromeIcon /> },
  {
    name: 'futures',
    open: true,
    active: true,
    icon: (
      <svg width="24" height="24" viewBox="0 0 24 24">
        <rect x="1" y="1" width="22" height="22" rx="2" fill="#8f9698" />
        <circle cx="12" cy="4.500" r="2" fill="#b0123c" />
        <path d="M2 6l8 2h4l8-2-2 3-6 1 5 3-5-1-1 10h-2l-1-10-5 1 5-3-6-1z" fill="#b0123c" />
      </svg>
    ),
  },
];

const Taskbar = () => (
  <footer className="flex h-10 shrink-0 items-stretch bg-linear-to-r from-[#22363e] to-[#1c2a45] text-white">
    <button type="button" aria-label="start" className="flex w-12 items-center justify-center">
      <svg width="16" height="16" viewBox="0 0 16 16" fill="#fff">
        <path d="M0 2l7-1v6.500H0zM8 1l8-1v7.500H8zM0 8.500h7V15l-7-1zM8 8.500h8V16l-8-1z" />
      </svg>
    </button>
    <label className="flex w-[345px] items-center border border-[#c4c4c4] bg-[#f2f2f2] text-[#333]">
      <svg width="18" height="18" viewBox="0 0 18 18" fill="none" stroke="#222" strokeWidth="1.400" className="mx-[11px]">
        <circle cx="11" cy="7" r="5.300" />
        <path d="M7 11l-6 6" />
      </svg>
      <input type="text" aria-label="search" placeholder="在这里输入你要搜索的内容" className="w-full bg-transparent text-[14px] outline-none placeholder:text-[#333]" />
    </label>
    {apps.map((app) => (
      <button type="button" key={app.name} aria-label={app.name} className="relative flex w-[49px] items-center justify-center">
        {app.active && <span className="absolute bottom-0 h-5 w-[42px] bg-white/20" />}
        <span className="relative">{app.icon}</span>
        {app.open && <span className="absolute bottom-0 h-0.5 w-10 bg-[#76b9ed]" />}
      </button>
    ))}
    <div className="ml-auto flex items-center">
      <svg width="66" height="20" viewBox="0 0 66 20" fill="none" stroke="#fff" strokeWidth="1.200" aria-hidden="true">
        <path d="M4 13l5-5 5 5M29 5h13v9H29M35 14v3M31 17.500h8M27 4h4v5h-4zM29 9v8M49 8h3l4-4v13l-4-4h-3z" />
        <circle cx="61" cy="14" r="4.500" fill="#e02030" stroke="none" />
        <path d="M59 12l4 4M63 12l-4 4" />
      </svg>
      <span className="ml-2 text-sm">中</span>
      <span className="ml-[13px]">
        <SogouLogo size={16} />
      </span>
      <time className="ml-3.5 w-16 text-center text-xs leading-5">
        17:05
        <br />
        2021/12/9
      </time>
      <button type="button" aria-label="notifications" className="mr-5 ml-[17px]">
        <svg width="16" height="18" viewBox="0 0 16 18" fill="none" stroke="#fff" strokeWidth="1.300">
          <path d="M1 1h14v12h-4v4l-4-4H1z" />
        </svg>
      </button>
      <span className="mr-1 h-10 border-l border-[#59657a]" />
    </div>
  </footer>
);

const App: React.FC = () => (
  <div className="flex h-screen flex-col overflow-hidden bg-[#f0f0f0] text-[#111] [font-family:'Open_Sans','Noto_Sans_CJK_SC',sans-serif]">
    <TitleBar />
    <MenuBar />
    <ToolBar />
    <div className="flex min-h-0 flex-1 pb-[3px]">
      <LeftDock />
      <main className="flex min-w-0 flex-1 flex-col border-b border-l-2 border-[#a0a0a0]">
        <TabStrip />
        <div className="flex min-h-0 flex-1 flex-col border-x-2 border-t border-b-3 border-white pr-0.5">
          <Chart />
        </div>
      </main>
      <RightDock />
    </div>
    <StatusBar />
    <Taskbar />
  </div>
);

export default App;
